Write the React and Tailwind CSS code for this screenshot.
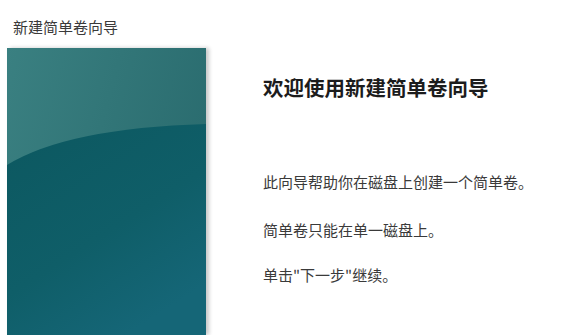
export default function App() {
    return (
        <div className="w-[567px] h-[335px] bg-white flex flex-col overflow-hidden"
            style={{ fontFamily: '"Noto Sans CJK SC", "Noto Sans", sans-serif' }}>

            {/* Window title */}
            <div className="pl-[13px] pt-[17px] h-[48px] text-[15px] leading-[20px] text-[#3a3a3a]">
                新建简单卷向导
            </div>

            <div className="flex flex-1">
                {/* Side banner */}
                <div className="ml-[7px] w-[199px] h-[287px] shrink-0 shadow-[3px_0_4px_rgba(0,0,0,0.22)]">
                    <svg width="199" height="287" viewBox="0 0 199 287" className="block">
                        <defs>
                            <linearGradient id="top" x1="0" y1="0" x2="1" y2="0.4">
                                <stop offset="0" stopColor="#3a8081" />
                                <stop offset="1" stopColor="#2a6c6f" />
                            </linearGradient>
                            <linearGradient id="bottom" x1="0" y1="0" x2="0.6" y2="1">
                                <stop offset="0" stopColor="#0c5860" />
                                <stop offset="0.6" stopColor="#0f5e68" />
                                <stop offset="1" stopColor="#156677" />
                            </linearGradient>
                        </defs>
                        <rect width="199" height="287" fill="url(#top)" />
                        <path d="M0 117 Q 60 80 199 76 L199 287 L0 287 Z" fill="url(#bottom)" />
                    </svg>
                </div>

                {/* Content */}
                <div className="pl-[57px] flex flex-col">
                    <h1 className="mt-[25px] text-[20.5px] leading-[28px] font-bold text-[#1c1c1c]">
                        欢迎使用新建简单卷向导
                    </h1>
                    <p className="mt-[71px] text-[15px] leading-[20px] text-[#3a3a3a]">
                        此向导帮助你在磁盘上创建一个简单卷。
                    </p>
                    <p className="mt-[28px] text-[15px] leading-[20px] text-[#3a3a3a]">
                        简单卷只能在单一磁盘上。
                    </p>
                    <p className="mt-[25px] text-[15px] leading-[20px] text-[#3a3a3a]">
                        单击"下一步"继续。
                    </p>
                </div>
            </div>
        </div>
    );
}
